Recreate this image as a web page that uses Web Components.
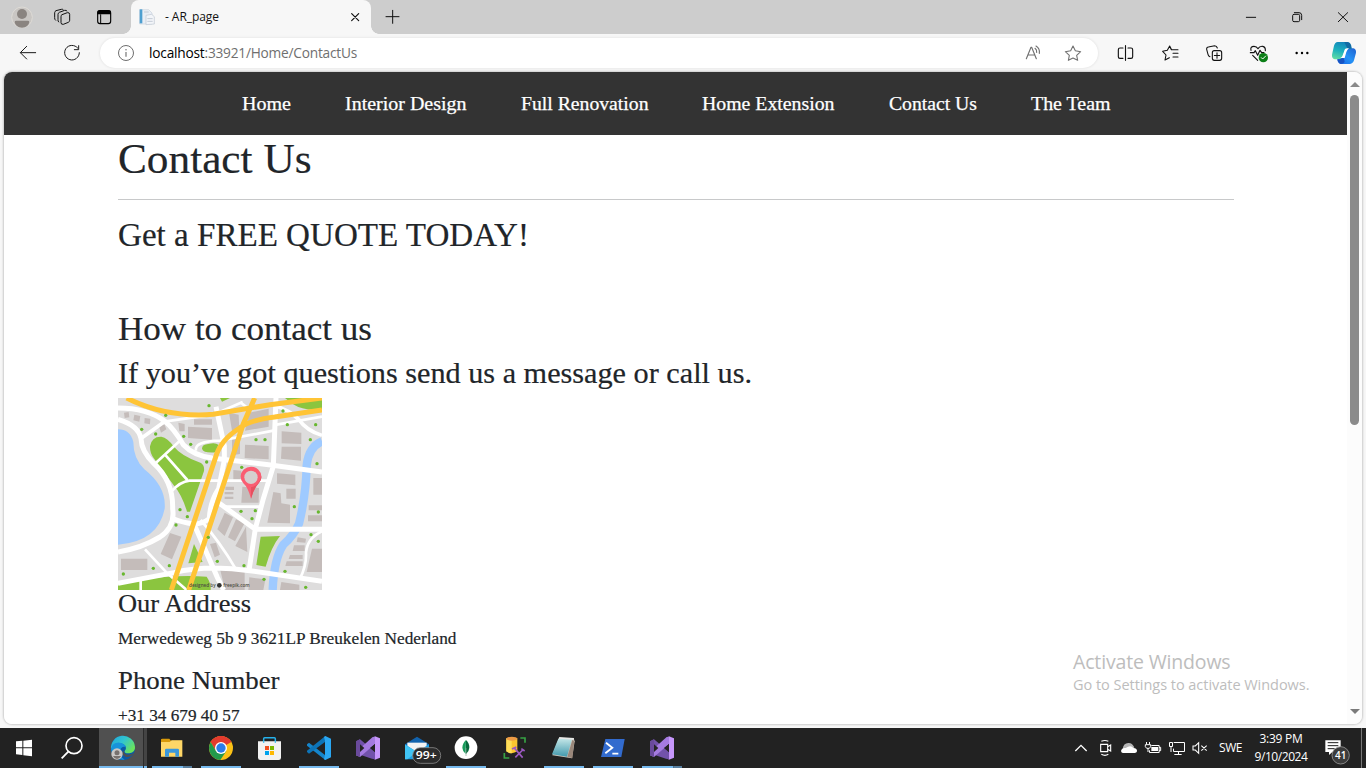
<!DOCTYPE html>
<html lang="en">
<head>
<meta charset="utf-8">
<title>- AR_page</title>
<style>
html,body{margin:0;height:100%;overflow:hidden;background:#f7f7f7}
body{font-family:"Open Sans","Noto Sans",sans-serif;font-size:12px}
</style>
</head>
<body>
<desktop-screen></desktop-screen>
<script>
const VS = `<path d="M48 52L60 46L110 88L104 106L96 104L60 92L48 94Z" fill="#7252aa"/><path d="M48 94L60 99L105 60L105 38L98 39L48 84Z" fill="#a57be0"/><path d="M48 52L60 46V99L48 94Z" fill="#6a4a9c"/><path d="M60 61V84L73 72Z" fill="#242424"/><path d="M103 36L120 43V101L103 108Q105 106 105 102V42Q105 38 103 36Z" fill="#c797fb"/><path d="M105 60V85L90 72Z" fill="#242424"/>`;
const line = (d, c = '#111', w = 3.4) => `<path d="${d}" fill="none" stroke="${c}" stroke-width="${w}" stroke-linecap="round" stroke-linejoin="round"/>`;

/* every icon: [width, height, viewBox, body] */
const ICONS = {
  profile: [44, 34, '0 0 132 102', `<circle cx="66" cy="52" r="31" fill="#c9c6c3" stroke="#dedbd6" stroke-width="3"/><circle cx="66" cy="42" r="15" fill="#8a8480"/><path d="M44 66Q44 62 49 62H83Q88 62 88 66Q86 82 66 83Q46 82 44 66Z" fill="#8a8480"/>`],
  workspaces: [40, 34, '132 0 120 102', line('M186 44L202 38Q209 37 209 43V61Q209 65 205 67L190 73Q183 74 183 68V50Q183 46 186 44M176 66Q173 63 174 59V43Q174 39 178 37L194 31Q199 30 201 33M167 61Q163 58 164 53V38Q164 34 168 32L184 28Q189 27 190 29', '#111', 3)],
  tabs: [47, 34, '252 0 141 102', `<rect x="293" y="32" width="39" height="39" rx="7" fill="none" stroke="#000" stroke-width="3.4"/><path d="M292 36Q292 31 298 31H327Q333 31 333 37V43H292Z" fill="#000"/>` + line('M302 44V70', '#000', 3)],
  favicon: [16, 18, '416 25 48 54', `<path d="M418 30H445L455 40V73H418Z" fill="#e9eef5" stroke="#c9d2dd" stroke-width="2"/><path d="M418 29H426V71H418Z" fill="#4e9fd0"/><path d="M437 47L454 44L462 51V73L437 75Z" fill="#f3f5f9" stroke="#bcc5d1" stroke-width="2"/><path d="M441 57H457M441 65H457M431 37H445" stroke="#c3cad5" stroke-width="3"/>`],
  close: [12, 14, '1048 31 36 42', line('M1056 42L1077 63M1077 42L1056 63', '#111', 3.6)],
  plus: [42, 34, '1113 0 126 102', line('M1178 31V70M1158 50H1197', '#111', 3)],
  min: [46, 34, '684 0 138 102', line('M739 52H767', '#111', 3)],
  restore: [46, 34, '822 0 138 102', `<rect x="878" y="43" width="21" height="22" rx="4" fill="none" stroke="#111" stroke-width="3"/>` + line('M883 38H897Q905 38 905 46V59', '#111', 3)],
  exit: [46, 34, '960 0 138 102', line('M1015 38L1043 65M1043 38L1015 65', '#111', 3)],
  back: [56, 38, '0 102 168 114', line('M107 158H62M80 139L61 158L80 177', '#1a1a1a', 3)],
  reload: [44, 38, '150 102 132 114', line('M233 144A22 22 0 1 0 238 158M236 137V149H223', '#1a1a1a', 3)],
  info: [24, 30, '342 114 72 90', `<circle cx="378" cy="159" r="22.5" fill="none" stroke="#6e6e6e" stroke-width="3"/><path d="M378 156V170" stroke="#6e6e6e" stroke-width="3.4"/><circle cx="378" cy="149" r="2.2" fill="#6e6e6e"/>`],
  read: [40, 30, '39 114 120 90', line('M79 176L93 142H95L109 176M84 165H104M105 145Q111 149 110 157M108 138Q120 145 118 160', '#707070', 3.4)],
  star: [40, 30, '159 114 120 90', line('M219 138L226 152L242 155L230 166L233 181L219 174L205 181L208 166L196 155L212 152Z', '#707070', 3.2)],
  split: [44, 38, '312 102 132 114', line('M376.500 137V181M369 144H360Q355 144 355 149V170Q355 175 360 175H369M384 144H393Q398 144 398 149V170Q398 175 393 175H384')],
  favs: [44, 38, '444 102 132 114', line('M534 149H516M534 160H519M534 171H519M514 148H514L509 138L502 151L488 154L498 165L495 180L508 173M514 149L509 138', '#111', 3.2)],
  collections: [44, 38, '576 102 132 114', `<rect x="637" y="152" width="28" height="29" rx="6" fill="none" stroke="#111" stroke-width="3.3"/>` + line('M651 158V175M643 166.500H659M630 170Q625 168 624 163L620 148Q619 142 625 141L644 137Q650 137 652 144', '#111', 3.2)],
  health: [44, 38, '708 102 132 114', line('M753 151Q750 139 762 139Q770 139 774 146Q779 138 788 139Q797 141 796 152M758 166L773 181M751 158H762L766 152L773 166L780 151L785 158H792') + `<circle cx="790" cy="173" r="14" fill="#0c7f17"/>` + line('M784 173L788 177L797 168', '#fff', 3)],
  more: [44, 38, '840 102 132 114', `<circle cx="890" cy="159" r="3.6"/><circle cx="906" cy="159" r="3.6"/><circle cx="922" cy="159" r="3.6"/>`],
  copilot: [42, 38, '972 102 126 114', `<defs><linearGradient id="a" x1=".5" y1="0" x2=".2" y2="1"><stop offset="0" stop-color="#1286bb"/><stop offset=".5" stop-color="#1db2bd"/><stop offset="1" stop-color="#62dda4"/></linearGradient><linearGradient id="b" x1="0" y1="1" x2="1" y2="0"><stop offset="0" stop-color="#1664e8"/><stop offset=".5" stop-color="#2592f5"/><stop offset="1" stop-color="#1e60cf"/></linearGradient></defs><path d="M1044 145H1060Q1069 147 1068 158L1062 181Q1059 191 1050 192H1022Q1014 191 1012 178L1026 174Z" fill="url(#b)"/><path d="M1013 126H1043Q1051 127 1053 136L1055 146H1042Q1036 146 1034 152L1028 171Q1026 178 1018 178H1004Q995 175 996 164L1002 137Q1005 127 1013 126Z" fill="url(#a)"/><path d="M1012 178H1019Q1027 177 1029 168L1034 184Q1032 192 1023 192Q1014 191 1012 178Z" fill="#1754c4"/><path d="M1033 126H1043Q1051 127 1053 136L1055 146H1043Q1037 136 1033 126Z" fill="#126ba4"/><path d="M1035 147Q1038 144 1047 145Q1042 148 1039 156L1034 174H1021Q1026 172 1028 166Z" fill="#fff"/>`],

  start: [48, 40, '0 12 144 120', `<path d="M48 52L67 50V70H48ZM70 50L96 47V70H70ZM48 73H67V93L48 91ZM70 73H96V97L70 94Z" fill="#fff"/>`],
  search: [51, 40, '144 12 153 120', `<circle cx="222" cy="65" r="24" fill="none" stroke="#fff" stroke-width="5"/><path d="M205 83L185 103" stroke="#fff" stroke-width="5.5"/>`],
  edge: [48, 40, '297 12 144 120', `<defs><linearGradient id="e" x1="0" y1="0" x2="1" y2=".6"><stop offset="0" stop-color="#1fa5dc"/><stop offset=".5" stop-color="#31c4d0"/><stop offset="1" stop-color="#6be35b"/></linearGradient></defs><path d="M297 12H429V126H297Z" fill="#505050"/><path d="M429 12H432V132H429Z" fill="#2b2b2b"/><path d="M432 12H441V132H432Z" fill="#444"/><circle cx="369" cy="72" r="36" fill="#0c59a4"/><path d="M333 75A36 36 0 0 1 405 68Q407 84 388 88Q372 89 374 81Q380 76 377 67Q370 57 355 58Q341 61 333 75Z" fill="url(#e)"/><path d="M333 75Q338 54 359 56Q374 58 378 69Q364 65 360 80Q358 97 374 107Q336 110 333 75Z" fill="#1793db"/><path d="M375 79Q366 86 380 92Q391 94 402 87Q391 103 376 98Q357 88 375 79Z" fill="#505050"/><circle cx="351" cy="90" r="17" fill="#c9c7c5"/><circle cx="351" cy="86" r="7.5" fill="#77716e"/><path d="M339 96H363Q359 105 351 105Q343 105 339 96Z" fill="#77716e"/><path d="M297 126H429V132H297ZM432 126H441V132H432Z" fill="#76b9ed"/>`],
  files: [48, 40, '444 12 144 120', `<path d="M483 46Q484 44 487 44H508L513 50H545V64H483Z" fill="#d99a0b"/><path d="M483 54H509L515 49H547V98H483Z" fill="#ffd767"/><path d="M495 98V78Q495 74 499 74H533Q537 74 537 78V98H526V86H507V98Z" fill="#3b98db"/><path d="M456 126H549V132H456Z" fill="#76b9ed"/><path d="M549 126H576V132H549Z" fill="#587f9f"/>`],
  chrome: [48, 40, '591 12 144 120', `<circle cx="663" cy="72" r="36" fill="#fbc116"/><path d="M663 72L632 54A36 36 0 0 1 694 54Z" fill="#e33b2e"/><path d="M663 54H694A36 36 0 0 0 632 54L648 81Z" fill="#e33b2e"/><path d="M632 54A36 36 0 0 0 661 108L679 81L648 81Z" fill="#229a4b"/><circle cx="663" cy="72" r="18" fill="#fff"/><circle cx="663" cy="72" r="14" fill="#2b7de9"/><path d="M603 126H723V132H603Z" fill="#76b9ed"/>`],
  store: [48, 40, '738 12 144 120', `<path d="M791 56V44Q791 41 794 41H823Q826 41 826 44V56" fill="none" stroke="#26b2ec" stroke-width="4.5"/><path d="M774 52H843V101Q843 108 836 108H781Q774 108 774 101Z" fill="#f2f2f2"/><path d="M791 52V56M826 52V56" stroke="#26b2ec" stroke-width="4"/><path d="M795 66H807V78H795Z" fill="#f14f21"/><path d="M810 66H822V78H810Z" fill="#7eb900"/><path d="M795 81H807V93H795Z" fill="#00a3ee"/><path d="M810 81H822V93H810Z" fill="#feb800"/>`],
  code: [48, 40, '885 12 144 120', `<path d="M921 61L927 56L976 94V108L921 65Z" fill="#1585cb"/><path d="M921 84L927 89L976 53V36L921 80Z" fill="#0d74b8"/><path d="M976 36L993 44V100L976 108Q974 108 972 105L975 94V50L972 39Z" fill="#2aa7f2"/><path d="M897 126H1017V132H897Z" fill="#76b9ed"/>`],
  studio: [48, 40, '12 12 144 120', VS],
  mail: [49, 40, '159 12 147 120', `<path d="M195 61L231 38L267 61V70H195Z" fill="#1263ad"/><path d="M202 56H260V80H202Z" fill="#f3f3f3"/><path d="M195 61L231 84L267 61V106H195Z" fill="#1c9fe6"/><path d="M195 62L231 84L202 106H195Z" fill="#40c4f5"/><rect x="218" y="71" width="84" height="47" rx="23" fill="#2b2b2b" stroke="#8b8b8b" stroke-width="2.4"/><text x="227" y="104" font-size="32" font-weight="600" fill="#fff" textLength="63" lengthAdjust="spacingAndGlyphs">99+</text>`],
  mongo: [48, 40, '306 12 144 120', `<circle cx="378" cy="71" r="34" fill="#fff"/><path d="M378 48Q367 59 367 71Q368 83 377 90Z" fill="#189b5b"/><path d="M378 48Q389 59 388 71Q387 83 378 90Z" fill="#07693d"/><path d="M378 72V96" stroke="#89a898" stroke-width="2"/><path d="M318 126H438V132H318Z" fill="#76b9ed"/>`],
  sql: [48, 40, '453 12 144 120', `<path d="M499 43V82Q515 93 532 82V43Z" fill="#fcc62f"/><path d="M499 43V82Q507 88 515 88V43Z" fill="#ffde59"/><ellipse cx="515.500" cy="44" rx="16.500" ry="6" fill="#ed9b45"/><path d="M541 42H555V56M493 87V102H508" fill="none" stroke="#37a344" stroke-width="5"/><path d="M522 71L548 101M548 78L526 100M516 75L529 69M544 74L554 81" fill="none" stroke="#9c59c2" stroke-width="5"/>`],
  notes: [48, 40, '600 12 144 120', `<defs><linearGradient id="n" x1="0" y1="0" x2="0" y2="1"><stop offset="0" stop-color="#c3e6e7"/><stop offset="1" stop-color="#4199ad"/></linearGradient></defs><path d="M657 42L701 43L704 52L696 103L637 94Z" fill="#cfc7bd"/><path d="M655 44L696 46L681 98L636 91Z" fill="url(#n)"/><path d="M658 39L702 42L701 47L656 44Z" fill="#e7e8e6"/><path d="M697 48L703 51L697 103L682 98Z" fill="#99877a"/><path d="M612 126H732V132H612Z" fill="#76b9ed"/>`],
  shell: [48, 40, '747 12 144 120', `<path d="M796 45H854L844 99H783Z" fill="#326bce"/><path d="M798 56L817 71L796 88M817 89H835" fill="none" stroke="#fff" stroke-width="5.5"/><path d="M759 126H879V132H759Z" fill="#76b9ed"/>`],
  studio2: [48, 40, '12 12 144 120', VS + `<path d="M24 126H118V132H24Z" fill="#76b9ed"/><path d="M118 126H144V132H118Z" fill="#587f9f"/>`],

  chevron: [24, 40, '87 264 72 120', `<path d="M106 333L123 316L140 333" fill="none" stroke="#fff" stroke-width="4"/>`],
  meet: [24, 40, '159 264 72 120', `<path d="M182 313H203V335H182ZM203 320L212 315V333L203 328M184 304Q195 299 205 304M184 343Q195 349 205 343" fill="none" stroke="#fff" stroke-width="3.4"/>`],
  cloud: [24, 40, '231 264 72 120', `<path d="M248 327Q250 309 265 309Q276 308 283 322L270 337H250Z" fill="#b6b6b6"/><path d="M243 333Q245 323 257 324Q272 314 280 324Q292 325 291 334Q290 339 284 339H249Q244 339 243 333Z" fill="#fff"/>`],
  battery: [24, 40, '303 264 72 120', `<path d="M334 316.500H357.500V337.500H328.500V331M357 322H362V332H357" fill="none" stroke="#fff" stroke-width="3"/><path d="M334 321H354V333H334Z" fill="#fff"/><path d="M319.500 306V313M328.500 306V313M316 314H332V320L328 325H320L316 320ZM324 325V336" fill="none" stroke="#fff" stroke-width="3"/>`],
  network: [24, 40, '375 264 72 120', `<path d="M401 307.500H433.500V334.500H400.500V326M415.500 335V343M403 343.500H425M388.500 307.500H397.500V319.500H388.500ZM393 321V336" fill="none" stroke="#fff" stroke-width="3"/>`],
  mute: [24, 40, '447 264 72 120', `<path d="M459 318H466L476 308V340L466 330H459ZM484 317L500 332M500 317L484 332" fill="none" stroke="#fff" stroke-width="3.2"/>`],
  action: [48, 40, '819 264 144 120', `<path d="M856 301H902V336H877L867 345V336H856Z" fill="#fff"/><path d="M863 308H895M863 317H895M863 326H884" stroke="#202020" stroke-width="3"/><circle cx="902" cy="346" r="26" fill="#3b3b3b" stroke="#9a9a9a" stroke-width="2.400"/><text x="885" y="357" font-size="32" font-weight="600" fill="#fff" textLength="34" lengthAdjust="spacingAndGlyphs">41</text>`],

  map: [204, 192, '24 18 612 576', `
<path d="M24 18H636V594H24Z" fill="#dedddd"/>
<g fill="#c4bcba"><path d="M42 62L56 60L58 76L44 78ZM73 68L91 72L88 89L70 85ZM104 78L121 80L120 97L103 94ZM234 104L306 108V143L234 138ZM252 82H306V98H252ZM205 92L224 96V118H208ZM147 103L163 97L169 112L153 122ZM357 62L386 68L388 118L366 116ZM418 62L476 50V104L405 116ZM366 142L390 136V186L366 190ZM405 158L476 162V202L404 198ZM515 118L574 122V156L515 154ZM515 164H573V206L513 200ZM501 244L556 248V280L501 275ZM529 290H557V320H529ZM490 300L512 304L514 334L540 338V394L472 392ZM610 258H636V308H610ZM596 340H636V355H596ZM594 370H636V388H594ZM370 234L394 236L392 263H370ZM398 236H440V264H398ZM397 284L447 288L446 332H394ZM346 284H372V294H346ZM344 300H370V307H344ZM344 314H370V321H344ZM344 362L369 376L344 432L322 412ZM378 382L404 393L375 448L354 436ZM408 404L412 480L376 462ZM180 423L214 434L186 502L152 486ZM33 500H112V534H33ZM330 530L404 538V594H345ZM563 436L588 440L586 452L560 450ZM552 460H584V477H548ZM540 489H578V501H536ZM530 508H578V522H526ZM606 470H636V540H590ZM418 556L466 562L460 594H415ZM514 570L568 578V594H510ZM300 456L318 452L330 488L314 496Z"/></g>
<path d="M24 112Q61 112 70 150Q70 200 103 232Q170 285 164 350Q145 448 24 458Z" fill="#9fcaff"/>
<path d="M636 148Q596 164 590 220Q588 310 567 395Q552 430 520 458Q492 500 488 594" fill="none" stroke="#9fcaff" stroke-width="25"/>
<g fill="#8bc53f"><path d="M120 163Q125 133 154 134Q173 138 190 162Q214 193 273 213Q284 220 282 237L240 359H231Q216 308 190 278L133 201Q119 184 120 163ZM276 170Q276 157 295 156Q315 150 325 158L317 181Q280 184 276 170ZM452 434L510 432Q484 464 467 524L439 519ZM252 456L278 510L235 514ZM24 594V580L92 564Q190 548 290 554Q304 575 302 594ZM525 18H636V52Q582 58 548 36ZM330 18H360L336 29Z"/></g>
<g fill="none" stroke="#fff" stroke-width="15"><path d="M24 48Q112 48 165 88Q192 110 220 158Q250 190 306 198L476 218L636 240M24 82Q86 100 93 140Q94 178 132 215Q190 268 188 350Q196 405 150 435Q96 468 24 480M498 18L490 222L460 320L436 410L418 529M24 574L192 542Q290 518 420 536L636 568M318 44L343 162V205L326 290Q300 330 298 380Q278 396 252 396Q212 390 190 380M320 328L436 412H636M252 396L322 556L341 594" /><path d="M636 130Q590 116 566 82Q538 54 490 40M92 140L165 88" stroke-width="11"/></g>
<g fill="none" stroke="#fff" stroke-width="8"><path d="M134 216L212 144M165 188L232 264M187 296Q210 270 238 266H474M258 176Q252 148 330 146L490 116M167 88L310 68L398 30M336 344H448M105 472L172 544M172 544L230 594M272 384Q330 450 378 532M500 98L636 74M636 418Q592 438 588 482Q590 520 570 560M92 566V594M390 30L418 52"/></g>
<g fill="none" stroke="#ffc435" stroke-width="15"><path d="M50 18Q168 78 310 67Q400 52 480 38L636 18M434 18L400 95L346 260L236 594M636 54L494 75Q420 84 389 108Q330 145 316 198L184 594"/></g>
<g fill="#68b72f"><circle cx="95" cy="112" r="5"/><circle cx="137" cy="126" r="5"/><circle cx="167" cy="70" r="5"/><circle cx="221" cy="133" r="5"/><circle cx="242" cy="157" r="5"/><circle cx="297" cy="41" r="5"/><circle cx="290" cy="210" r="5"/><circle cx="395" cy="226" r="5"/><circle cx="438" cy="143" r="5"/><circle cx="465" cy="143" r="5"/><circle cx="519" cy="57" r="5"/><circle cx="532" cy="98" r="5"/><circle cx="617" cy="98" r="5"/><circle cx="601" cy="143" r="5"/><circle cx="621" cy="215" r="5"/><circle cx="210" cy="353" r="5"/><circle cx="232" cy="374" r="5"/><circle cx="198" cy="399" r="5"/><circle cx="393" cy="358" r="5"/><circle cx="436" cy="356" r="5"/><circle cx="426" cy="380" r="5"/><circle cx="295" cy="436" r="5"/><circle cx="322" cy="508" r="5"/><circle cx="402" cy="521" r="5"/><circle cx="178" cy="521" r="5"/><circle cx="130" cy="529" r="5"/><circle cx="40" cy="546" r="5"/><circle cx="462" cy="562" r="5"/><circle cx="553" cy="344" r="5"/><circle cx="625" cy="360" r="5"/><circle cx="603" cy="428" r="5"/><circle cx="525" cy="538" r="5"/><circle cx="587" cy="586" r="5"/><circle cx="625" cy="448" r="5"/></g>
<path d="M423 320Q414 286 400 274A31 30 0 1 1 446 274Q431 289 423 320Z" fill="#fa5d72"/><path d="M423 320V286Q446 283 454 252Q456 264 446 274Q431 290 423 320Z" fill="#e6505f"/><circle cx="423" cy="256" r="20" fill="#d5cfce"/>
<circle cx="328" cy="580" r="7" fill="#333"/><g font-size="15" font-weight="600" fill="#4b4b42"><text x="237" y="585" textLength="80" lengthAdjust="spacingAndGlyphs">designed by</text><text x="340" y="585" textLength="79" lengthAdjust="spacingAndGlyphs">freepik.com</text></g>`]
};

class UiIcon extends HTMLElement {
  connectedCallback() {
    const [w, h, box, body] = ICONS[this.getAttribute('name')];
    this.attachShadow({mode: 'open'}).innerHTML =
      `<style>:host{display:block;flex:none;width:${w}px;height:${h}px}svg{display:block}</style>
       <svg width="${w}" height="${h}" viewBox="${box}" font-family="Open Sans, sans-serif">${body}</svg>`;
  }
}
customElements.define('ui-icon', UiIcon);

/* A line of text that fills its "width" attribute: by tracking, or with
   the "stretch" attribute by widening the letters themselves. */
class FitText extends HTMLElement {
  connectedCallback() {
    this.attachShadow({mode: 'open'}).innerHTML =
      `<style>:host{display:block;white-space:nowrap}span{display:inline-block;transform-origin:0 50%}</style><span><slot></slot></span>`;
    const span = this.shadowRoot.querySelector('span');
    const target = +this.getAttribute('width');
    const natural = span.getBoundingClientRect().width;
    if (this.hasAttribute('stretch')) span.style.transform = `scaleX(${target / natural})`;
    else span.style.letterSpacing = (target - natural) / this.textContent.length + 'px';
    this.style.width = target + 'px';
  }
}
customElements.define('fit-text', FitText);

const define = (name, html) => customElements.define(name, class extends HTMLElement {
  connectedCallback() {
    if (!this.shadowRoot) this.attachShadow({mode: 'open'}).innerHTML = html;
  }
});
const icons = (...names) => names.map(n => `<ui-icon name="${n}"></ui-icon>`).join('');
const serif = (width, text) => `<fit-text stretch width="${width}">${text}</fit-text>`;

define('tab-strip', `<style>
:host{display:flex;height:34px;background:#cdcdcd;flex:none}
.tab{position:relative;width:240px;height:34px;box-sizing:border-box;padding:0 10px 0 8px;background:#f7f7f7;border-radius:8px 8px 0 0;display:flex;align-items:center;font-size:12px;color:#111}
.tab::before,.tab::after{content:"";position:absolute;bottom:0;width:8px;height:8px}
.tab::before{left:-8px;background:radial-gradient(circle at 0 0,transparent 7.5px,#f7f7f7 8px)}
.tab::after{right:-8px;background:radial-gradient(circle at 100% 0,transparent 7.5px,#f7f7f7 8px)}
fit-text{margin-left:10px;padding-bottom:2px}.grow{flex:1}
</style>${icons('profile','workspaces','tabs')}
<div class="tab"><ui-icon name="favicon"></ui-icon><fit-text width="54">- AR_page</fit-text><span class="grow"></span><ui-icon name="close"></ui-icon></div>
${icons('plus')}<span class="grow"></span>${icons('min','restore','exit')}`);

define('address-bar', `<style>
:host{display:flex;align-items:center;box-sizing:border-box;width:998px;height:30px;padding:0 5px 0 14px;border-radius:15px;background:#fff;box-shadow:0 0 3px #0000001c;font-size:13.700px}
fit-text{line-height:30px}.host{margin-left:11px;color:#000}.path{color:#6f6f6f;flex:1}
</style><ui-icon name="info"></ui-icon><fit-text class="host" width="55.500">localhost</fit-text><fit-text class="path" width="152.500">:33921/Home/ContactUs</fit-text>${icons('read','star')}`);

define('browser-toolbar', `<style>
:host{display:flex;align-items:center;height:38px;flex:none;background:#f7f7f7}
ui-icon[name=back]{margin-right:-6px}address-bar{margin:0 6px}
</style>${icons('back','reload')}<address-bar></address-bar>${icons('split','favs','collections','health','more','copilot')}`);

define('site-nav', `<style>
:host{display:flex;box-sizing:border-box;height:63px;padding-left:238px;gap:54px;align-items:center;background:#333;color:#fff;font-size:19px;line-height:27px;-webkit-text-stroke:.25px #fff}
</style>${serif(49,'Home')}${serif(121.5,'Interior Design')}${serif(127.5,'Full Renovation')}${serif(132.5,'Home Extension')}${serif(88,'Contact Us')}${serif(79.5,'The Team')}`);

define('contact-page', `<style>
:host{display:block;flex:1;min-width:0;overflow:hidden;background:#fff;color:#212529;font-family:"Liberation Serif",serif;font-size:16.800px;line-height:24px}
main{padding:0 113px 0 114px;-webkit-text-stroke:.2px #212529}
h1,h2,h3,h4,p{margin:0 0 8px;font-weight:400}
h1{font-size:42px;line-height:48px;margin-bottom:16px}
hr{margin:0 0 16px;border:0;height:1px;background:#c8c9ca}
h2{font-size:33.600px;line-height:38px}h2.quote{margin-bottom:56px}
h3{font-size:29.400px;line-height:34px}
h4{font-size:25.200px;line-height:27px;margin-bottom:10px}p{margin-bottom:16px}
</style><site-nav></site-nav><main>
<h1>${serif(193.5,'Contact Us')}</h1><hr>
<h2 class="quote">${serif(411,'Get a FREE QUOTE TODAY!')}</h2>
<h2>${serif(254,'How to contact us')}</h2>
<h3>${serif(634,'If you’ve got questions send us a message or call us.')}</h3>
<ui-icon name="map"></ui-icon>
<h4>${serif(133,'Our Address')}</h4>
<p>${serif(338.5,'Merwedeweg 5b 9 3621LP Breukelen Nederland')}</p>
<h4>${serif(161.5,'Phone Number')}</h4>
<p>${serif(121.5,'+31 34 679 40 57')}</p></main>`);

define('scroll-rail', `<style>
:host{display:flex;flex-direction:column;align-items:center;box-sizing:border-box;width:15px;padding:10px 0 10px;background:#fcfcfc}
i{border:5px solid transparent;border-top:0;border-bottom:5px solid #8a8a8a}
b{width:9px;height:330px;border-radius:5px;background:#8b8b8b;margin:8px 0 auto}
i:last-child{border-bottom:0;border-top:5px solid #7a7a7a}
</style><i></i><b></b><i></i>`);

define('activation-note', `<style>
:host{position:absolute;left:1073px;top:650px;color:#bdbdbd}
.a{font-size:19.500px;line-height:23px}.b{font-size:14.500px;line-height:23px}
</style><fit-text class="a" width="157.500">Activate Windows</fit-text><fit-text class="b" width="236.500">Go to Settings to activate Windows.</fit-text>`);

define('task-bar', `<style>
:host{display:flex;height:40px;flex:none;background:#222;color:#fff;font-size:12px}
.apps{display:flex;gap:1px}.grow{flex:1}
.lang{margin-left:6px;width:30px;line-height:40px}
.clock{display:flex;flex-direction:column;align-items:center;width:64px;line-height:18px;padding-top:2px}
.end{width:4px;border-left:1px solid #777}
ui-icon[name=mail]{margin-right:-1px}
</style>${icons('start','search')}<div class="apps">${icons('edge','files','chrome','store','code','studio','mail','mongo','sql','notes','shell','studio2')}</div><span class="grow"></span>
${icons('chevron','meet','cloud','battery','network','mute')}
<div class="lang"><fit-text width="23">SWE</fit-text></div><div class="clock"><fit-text width="43">3:39 PM</fit-text><fit-text width="53">9/10/2024</fit-text></div>
${icons('action')}<span class="end"></span>`);

define('desktop-screen', `<style>
:host{position:relative;display:flex;flex-direction:column;width:1366px;height:768px;background:#f7f7f7;overflow:hidden}
.view{display:flex;flex:1;min-height:0;margin:0 4px 4px;border-radius:8px;overflow:hidden;box-shadow:0 0 2px 1px #0000002e}
</style><tab-strip></tab-strip><browser-toolbar></browser-toolbar>
<div class="view"><contact-page></contact-page><scroll-rail></scroll-rail></div>
<task-bar></task-bar><activation-note></activation-note>`);
</script>
</body>
</html>
